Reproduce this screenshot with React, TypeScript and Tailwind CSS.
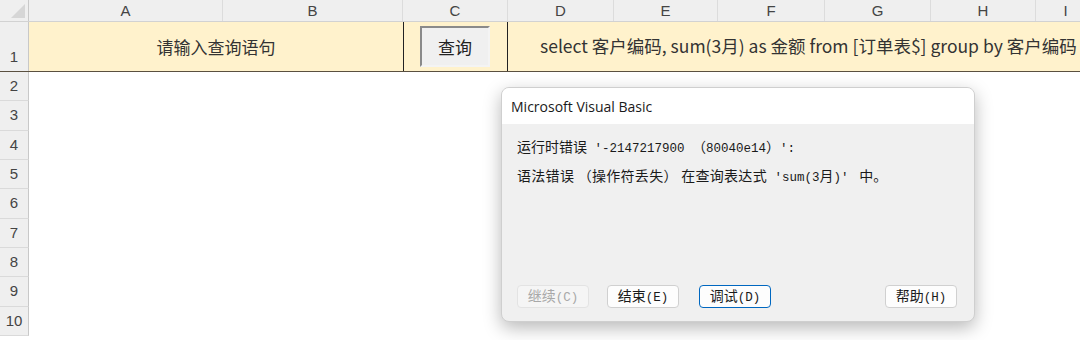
import React from "react";

// ---------------------------------------------------------------------------
// Sheet geometry
// ---------------------------------------------------------------------------

const COLUMNS = [
  { label: "A", width: "w-[194px]" },
  { label: "B", width: "w-[180px]" },
  { label: "C", width: "w-[105px]" },
  { label: "D", width: "w-[106px]" },
  { label: "E", width: "w-[104px]" },
  { label: "F", width: "w-[107px]" },
  { label: "G", width: "w-[106px]" },
  { label: "H", width: "w-[105px]" },
  { label: "I", width: "w-[60px]" },
];

const ROWS = [2, 3, 4, 5, 6, 7, 8, 9, 10];

const CJK = "font-['Noto_Sans_CJK_SC',sans-serif]";
const MONO = "font-['Liberation_Mono','Noto_Sans_CJK_SC',monospace] text-[12.5px]";

// ---------------------------------------------------------------------------
// Dialog button
// ---------------------------------------------------------------------------

function DlgButton({
  label,
  hotkey,
  variant = "normal",
}: {
  label: string;
  hotkey: string;
  variant?: "normal" | "disabled" | "focus";
}) {
  const cls =
    variant === "disabled"
      ? "border-[#e3e3e3] bg-[#f5f5f5] text-[#a8a8a8]"
      : variant === "focus"
        ? "border-[#0067c0] bg-[#fdfdfd] text-[#1a1a1a]"
        : "border-[#d0d0d0] bg-[#fdfdfd] text-[#1a1a1a]";
  return (
    <div
      className={`flex h-[23px] w-[72px] items-center justify-center rounded-[4px] border ${cls}`}
    >
      <span className="flex items-baseline leading-none">
        <span className={`${CJK} text-[14px]`}>{label}</span>
        <span className={MONO}>({hotkey})</span>
      </span>
    </div>
  );
}

// ---------------------------------------------------------------------------
// Main component
// ---------------------------------------------------------------------------

export default function App() {
  return (
    <div className="relative h-[340px] w-[1080px] overflow-hidden bg-white font-['Liberation_Sans',sans-serif]">
      {/* ── Column header ─────────────────────────────────────────────── */}
      <div className="flex h-[22px] border-b border-[#d2d2d2] bg-[#efefef]">
        <div className="relative w-[29px] shrink-0 border-r border-[#c8c8c8]">
          <svg className="absolute bottom-[3px] right-[3px]" width="14" height="14" viewBox="0 0 14 14">
            <path d="M14 0 L14 14 L0 14 Z" fill="#d6d6d6" />
          </svg>
        </div>
        {COLUMNS.map((c) => (
          <div
            key={c.label}
            className={`${c.width} shrink-0 border-r border-[#dcdcdc] text-center text-[15px] leading-[22px] text-[#444]`}
          >
            {c.label}
          </div>
        ))}
      </div>

      {/* ── Row 1 ─────────────────────────────────────────────────────── */}
      <div className="flex h-[50px] border-b border-[#5a5040]">
        <div className="flex w-[29px] shrink-0 items-end justify-center border-r border-[#c8c8c8] bg-[#efefef] pb-[3px] text-[15px] text-[#444]">
          1
        </div>
        <div className={`flex w-[374px] shrink-0 items-center justify-center bg-[#fff2cc] ${CJK} text-[17px] text-[#333]`}>
          请输入查询语句
        </div>
        <div className="flex w-[105px] shrink-0 items-center border-x border-[#222] bg-[#fff2cc]">
          <div
            className={`ml-[16px] flex h-[41px] w-[70px] items-center justify-center border-2 border-t-[#8a8a8a] border-l-[#8a8a8a] border-b-[#f4f4f4] border-r-[#f4f4f4] bg-[#f0f0f0] ${CJK} text-[17px] text-[#222]`}
          >
            查询
          </div>
        </div>
        <div className={`flex flex-1 items-center bg-[#fff2cc] pl-[32px] ${CJK} text-[17.5px] whitespace-nowrap text-[#333]`}>
          select 客户编码, sum(3月) as 金额 from [订单表$] group by 客户编码
        </div>
      </div>

      {/* ── Rows 2-10 ─────────────────────────────────────────────────── */}
      {ROWS.map((r) => (
        <div key={r} className="flex h-[29.33px]">
          <div className="flex w-[29px] shrink-0 items-center justify-center border-r border-b border-r-[#c8c8c8] border-b-[#dadada] bg-[#efefef] text-[15px] text-[#444]">
            {r}
          </div>
          <div className="flex-1 bg-white" />
        </div>
      ))}

      {/* ── Runtime error dialog ──────────────────────────────────────── */}
      <div className="absolute left-[501px] top-[87px] flex h-[235px] w-[474px] flex-col overflow-hidden rounded-[8px] border border-[#cfcfcf] bg-[#f0f0f0] shadow-[0_6px_18px_rgba(0,0,0,0.28)]">
        <div className="flex h-[36px] shrink-0 items-center bg-white pl-[9px] font-['Open_Sans',sans-serif] text-[14px] text-[#1a1a1a]">
          Microsoft Visual Basic
        </div>
        <div className="flex flex-1 flex-col px-[15px] pt-[12px] text-[#1a1a1a]">
          <div className="flex h-[20px] items-baseline whitespace-nowrap">
            <span className={`${CJK} text-[14px]`}>运行时错误</span>
            <span className={MONO}>&nbsp;'-2147217900&nbsp;</span>
            <span className={`${CJK} text-[14px]`}>（</span>
            <span className={MONO}>80040e14</span>
            <span className={`${CJK} text-[14px]`}>）</span>
            <span className={MONO}>':</span>
          </div>
          <div className="mt-[9px] flex h-[20px] items-baseline whitespace-nowrap">
            <span className={`${CJK} text-[14px] tracking-[0.3px]`}>语法错误 （操作符丢失） 在查询表达式</span>
            <span className={MONO}>&nbsp;'sum(3</span>
            <span className={`${CJK} text-[14px]`}>月</span>
            <span className={MONO}>)'&nbsp;</span>
            <span className={`${CJK} text-[14px]`}>&nbsp;中。</span>
          </div>
          <div className="mt-auto mb-[13px] flex items-center">
            <DlgButton label="继续" hotkey="C" variant="disabled" />
            <div className="ml-[18px]">
              <DlgButton label="结束" hotkey="E" />
            </div>
            <div className="ml-[20px]">
              <DlgButton label="调试" hotkey="D" variant="focus" />
            </div>
            <div className="ml-auto mr-[2px]">
              <DlgButton label="帮助" hotkey="H" />
            </div>
          </div>
        </div>
      </div>
    </div>
  );
}
